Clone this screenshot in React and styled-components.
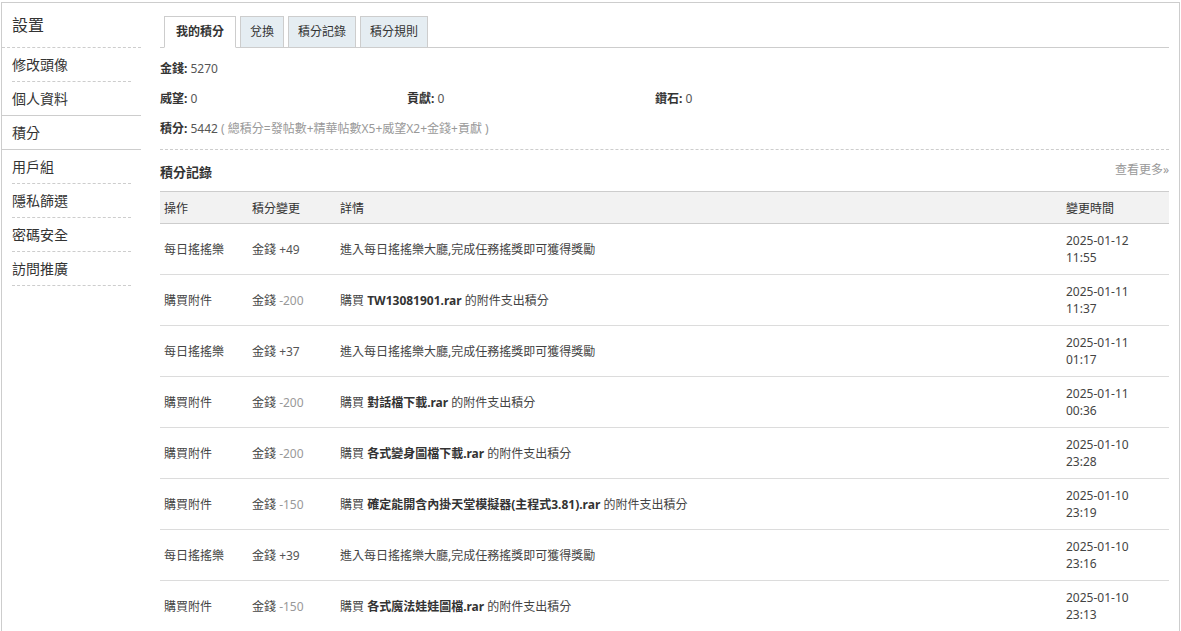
import React from 'react';
import styled, {createGlobalStyle} from 'styled-components';

const FONT = '"Noto Sans", "Noto Sans CJK TC", sans-serif';

const GlobalStyle = createGlobalStyle`
  body {
    margin: 0;
    background: #fff;
    font-family: ${FONT};
    font-size: 12px;
    color: #444;
  }
`

const Wrap = styled.div`
  display: flex;
  margin: 2px 1px 0 1px;
  border: 1px solid #cdcdcd;
  border-bottom: none;
  min-height: 640px;
`

const Side = styled.div`
  width: 139px;
  flex: none;
`

const SideTitle = styled.h2`
  margin: 0;
  padding: 0 10px;
  height: 44px;
  line-height: 44px;
  font-size: 16px;
  font-weight: normal;
  color: #333;
  border-bottom: 1px dashed #cdcdcd;
`

const SideList = styled.ul`
  margin: 0;
  padding: 0;
  list-style: none;
`

const SideItem = styled.li`
  height: 33px;
  line-height: 33px;
  font-size: 14px;
  color: #333;
  margin: ${props => props.active ? '-1px 0 0' : '0 10px'};
  padding-left: ${props => props.active ? '10px' : '0'};
  border-top: ${props => props.active ? '1px solid #cdcdcd' : 'none'};
  border-bottom: 1px ${props => props.active ? 'solid' : 'dashed'} #cdcdcd;
  position: relative;
  background: #fff;
`

const Main = styled.div`
  flex: 1;
  padding: 13px 10px 0 19px;
`

const TabBar = styled.ul`
  display: flex;
  margin: 0;
  padding: 0 0 0 4px;
  list-style: none;
  border-bottom: 1px solid #cdcdcd;
  height: 31px;
`

const Tab = styled.li`
  height: 30px;
  line-height: 30px;
  margin-right: 4px;
  padding: 0 ${props => props.active ? 11 : 9}px;
  border: 1px solid #cdcdcd;
  border-bottom-color: ${props => props.active ? '#fff' : '#cdcdcd'};
  background: ${props => props.active ? '#fff' : '#e5edf2'};
  font-weight: ${props => props.active ? 'bold' : 'normal'};
  color: #333;
`

const Stats = styled.div`
  display: grid;
  grid-template-columns: 247px 248px 1fr;
  padding: 6px 0 5px;
  border-bottom: 1px dashed #cdcdcd;
`

const Stat = styled.div`
  grid-column: ${props => props.full ? '1 / -1' : 'auto'};
  height: 30px;
  line-height: 30px;
  color: #555;

  b {
    color: #333;
  }
`

const Hint = styled.span`
  color: #999;
`

const Head = styled.div`
  display: flex;
  justify-content: space-between;
  align-items: center;
  height: 41px;
`

const HeadTitle = styled.h3`
  margin: 0;
  margin-top: 2px;
  font-size: 13px;
  color: #333;
`

const More = styled.span`
  color: #999;
  margin-top: -4px;
`

const Table = styled.table`
  width: 100%;
  border-collapse: collapse;
  table-layout: fixed;

  th {
    height: 31px;
    padding: 0 4px;
    text-align: left;
    font-weight: normal;
    color: #333;
    background: #f2f2f2;
    border-top: 1px solid #cdcdcd;
    border-bottom: 1px solid #cdcdcd;
  }

  td {
    height: 50px;
    padding: 0 4px;
    line-height: 17px;
    color: #444;
    border-bottom: 1px solid #dcdcdc;
    vertical-align: middle;
  }

  td b {
    color: #333;
  }
`

const Amount = styled.span`
  color: ${props => props.minus ? '#999' : '#555'};
`

const records = [
  {op: '每日搖搖樂', amt: '+49', file: null, t: ['2025-01-12', '11:55']},
  {op: '購買附件', amt: '-200', file: 'TW13081901.rar', t: ['2025-01-11', '11:37']},
  {op: '每日搖搖樂', amt: '+37', file: null, t: ['2025-01-11', '01:17']},
  {op: '購買附件', amt: '-200', file: '對話檔下載.rar', t: ['2025-01-11', '00:36']},
  {op: '購買附件', amt: '-200', file: '各式變身圖檔下載.rar', t: ['2025-01-10', '23:28']},
  {op: '購買附件', amt: '-150', file: '確定能開含內掛天堂模擬器(主程式3.81).rar', t: ['2025-01-10', '23:19']},
  {op: '每日搖搖樂', amt: '+39', file: null, t: ['2025-01-10', '23:16']},
  {op: '購買附件', amt: '-150', file: '各式魔法娃娃圖檔.rar', t: ['2025-01-10', '23:13']},
];

const menu = ['修改頭像', '個人資料', '積分', '用戶組', '隱私篩選', '密碼安全', '訪問推廣'];
const tabs = ['我的積分', '兌換', '積分記錄', '積分規則'];

export default function App() {
  return (
    <>
      <GlobalStyle />
      <Wrap>
        <Side>
          <SideTitle>設置</SideTitle>
          <SideList>
            {menu.map(m => (
              <SideItem key={m} active={m === '積分'}>{m}</SideItem>
            ))}
          </SideList>
        </Side>
        <Main>
          <TabBar>
            {tabs.map((t, i) => (
              <Tab key={t} active={i === 0}>{t}</Tab>
            ))}
          </TabBar>
          <Stats>
            <Stat full><b>金錢:</b> 5270</Stat>
            <Stat><b>威望:</b> 0</Stat>
            <Stat><b>貢獻:</b> 0</Stat>
            <Stat><b>鑽石:</b> 0</Stat>
            <Stat full>
              <b>積分:</b> 5442 <Hint>( 總積分=發帖數+精華帖數X5+威望X2+金錢+貢獻 )</Hint>
            </Stat>
          </Stats>
          <Head>
            <HeadTitle>積分記錄</HeadTitle>
            <More>查看更多»</More>
          </Head>
          <Table>
            <colgroup>
              <col style={{width: 88}} />
              <col style={{width: 88}} />
              <col />
              <col style={{width: 107}} />
            </colgroup>
            <thead>
              <tr>
                <th>操作</th>
                <th>積分變更</th>
                <th>詳情</th>
                <th>變更時間</th>
              </tr>
            </thead>
            <tbody>
              {records.map((r, i) => (
                <tr key={i}>
                  <td>{r.op}</td>
                  <td>金錢 <Amount minus={r.amt[0] === '-'}>{r.amt}</Amount></td>
                  <td>
                    {r.file
                      ? <>購買 <b>{r.file}</b> 的附件支出積分</>
                      : '進入每日搖搖樂大廳,完成任務搖獎即可獲得獎勵'}
                  </td>
                  <td>{r.t[0]}<br />{r.t[1]}</td>
                </tr>
              ))}
            </tbody>
          </Table>
        </Main>
      </Wrap>
    </>
  );
}
